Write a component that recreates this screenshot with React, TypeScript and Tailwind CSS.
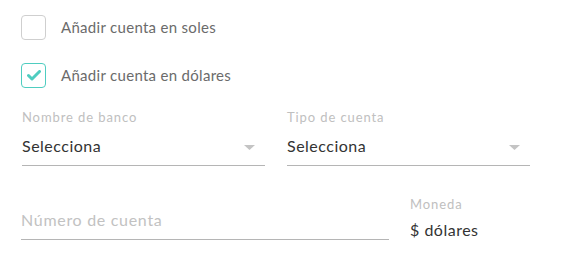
import React from 'react';

const Checkbox: React.FC<{ checked?: boolean; label: string }> = ({ checked, label }) => (
  <div className="flex items-center h-[25px]">
    <div
      className={`w-[25px] h-[25px] rounded-[4px] border flex items-center justify-center ${
        checked ? 'border-[#4fcdc0]' : 'border-[#cfcfcf]'
      }`}
    >
      {checked && (
        <svg width="14" height="11" viewBox="0 0 14 11">
          <path d="M1.5 5.5 L5 9 L12.5 1.5" fill="none" stroke="#4fcdc0" strokeWidth="3" strokeLinecap="round" strokeLinejoin="round" />
        </svg>
      )}
    </div>
    <span className="ml-[15px] text-[15px] tracking-[0.3px] text-[#6b6b6b]">{label}</span>
  </div>
);

const SelectField: React.FC<{ label: string }> = ({ label }) => (
  <div className="w-[243px]">
    <div className="text-[13px] leading-[16px] tracking-[0.9px] text-[#c0c0c0]">{label}</div>
    <div className="flex items-center justify-between h-[39px] border-b border-[#b5b5b5] mt-[2px]">
      <span className="text-[16px] tracking-[0.5px] text-[#333]">Selecciona</span>
      <svg width="11" height="5" viewBox="0 0 11 5" className="mr-[10px] mt-[2px]">
        <path d="M0 0 L11 0 L5.5 5 Z" fill="#c4c4c4" />
      </svg>
    </div>
  </div>
);

export default function App() {
  return (
    <div className="w-[563px] h-[280px] bg-white pl-[21px] pt-[15px]" style={{ fontFamily: 'Lato, "Open Sans", sans-serif' }}>
      <div className="flex flex-col gap-[23px]">
        <Checkbox label="Añadir cuenta en soles" />
        <Checkbox checked label="Añadir cuenta en dólares" />
      </div>
      <div className="flex gap-[22px] mt-[21px] pl-[1px]">
        <SelectField label="Nombre de banco" />
        <SelectField label="Tipo de cuenta" />
      </div>
      <div className="flex items-start mt-[30px]">
        <div className="w-[368px] h-[44px] border-b border-[#b5b5b5] flex items-center">
          <span className="text-[16px] tracking-[0.7px] text-[#c2c2c2] mt-[4px]">Número de cuenta</span>
        </div>
        <div className="ml-[21px] flex flex-col">
          <span className="text-[13px] leading-[16px] tracking-[0.9px] text-[#c0c0c0]">Moneda</span>
          <span className="text-[16px] tracking-[0.5px] text-[#333] mt-[6px]">$ dólares</span>
        </div>
      </div>
    </div>
  );
}
